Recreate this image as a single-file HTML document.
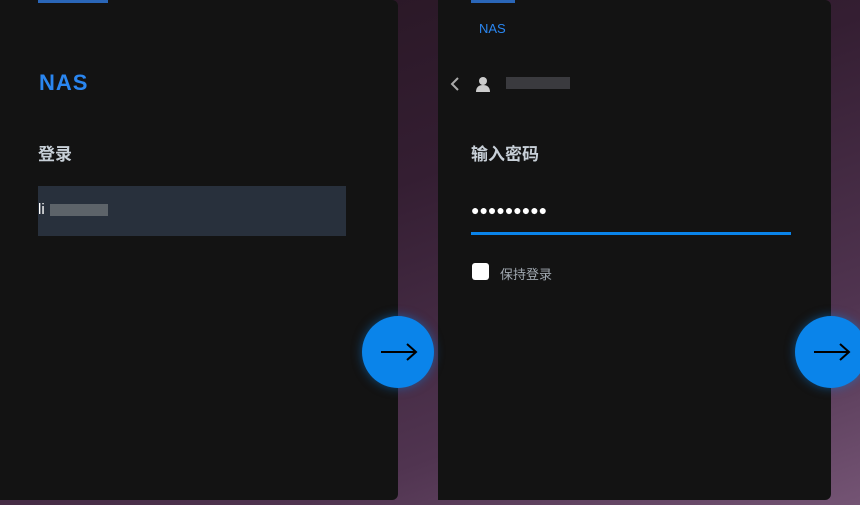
<!DOCTYPE html>
<html><head><meta charset="utf-8"><style>
body{margin:0;width:860px;height:505px;overflow:hidden;position:relative;font-family:"Liberation Sans","Noto Sans CJK SC",sans-serif;
background:linear-gradient(160deg,#24141f 0%,#341e32 40%,#503450 75%,#745474 100%);}
.p{position:absolute;top:0;height:500px;background:#131313;border-radius:0 6px 6px 0;}
.bar{position:absolute;top:0;height:3px;background:#2a66b8;}
.btn{position:absolute;width:72px;height:72px;border-radius:50%;background:#0a84ea;box-shadow:0 0 10px rgba(10,132,234,.5);}
.btn svg{position:absolute;left:18px;top:26px}
</style></head><body>
<div class="p" style="left:0;width:398px"></div>
<div class="bar" style="left:38px;width:70px"></div>
<div style="position:absolute;left:39px;top:70px;color:#2a86f0;font-weight:bold;font-size:22px;letter-spacing:1px">NAS</div>
<div style="position:absolute;left:38px;top:140px;color:#c8d0d8;font-weight:bold;font-size:17px">登录</div>
<div style="position:absolute;left:38px;top:186px;width:308px;height:50px;background:#28303c"></div>
<div style="position:absolute;left:38px;top:201px;color:#fff;font-size:15px">li</div>
<div style="position:absolute;left:50px;top:204px;width:58px;height:12px;background:#6a7074;opacity:.8"></div>
<div class="p" style="left:438px;width:393px"></div>
<div class="bar" style="left:471px;width:44px"></div>
<div style="position:absolute;left:479px;top:21px;color:#2a86f0;font-size:13px">NAS</div>
<svg style="position:absolute;left:450px;top:77px" width="10" height="14"><path d="M8 1L2 7l6 6" stroke="#aaa" stroke-width="2" fill="none"/></svg>
<svg style="position:absolute;left:475px;top:76px" width="16" height="16"><circle cx="8" cy="5" r="4" fill="#ccc"/><path d="M1 16c0-5 3-7 7-7s7 2 7 7z" fill="#ccc"/></svg>
<div style="position:absolute;left:506px;top:77px;width:64px;height:12px;background:#3a3a3e"></div>
<div style="position:absolute;left:471px;top:140px;color:#c8d0d8;font-weight:bold;font-size:17px">输入密码</div>
<div style="position:absolute;left:471px;top:202px;color:#fff;font-size:14px;letter-spacing:0px">●●●●●●●●●</div>
<div style="position:absolute;left:471px;top:232px;width:320px;height:3px;background:#0a84ea"></div>
<div style="position:absolute;left:472px;top:263px;width:17px;height:17px;background:#fff;border-radius:3px"></div>
<div style="position:absolute;left:500px;top:264px;color:#a0a8b0;font-size:13px">保持登录</div>
<div class="btn" style="left:362px;top:316px"><svg width="38" height="20"><path d="M1 10h35M27 2l9 8-9 8" stroke="#000" stroke-width="2" fill="none"/></svg></div>
<div class="btn" style="left:795px;top:316px"><svg width="38" height="20"><path d="M1 10h35M27 2l9 8-9 8" stroke="#000" stroke-width="2" fill="none"/></svg></div>
</body></html>
